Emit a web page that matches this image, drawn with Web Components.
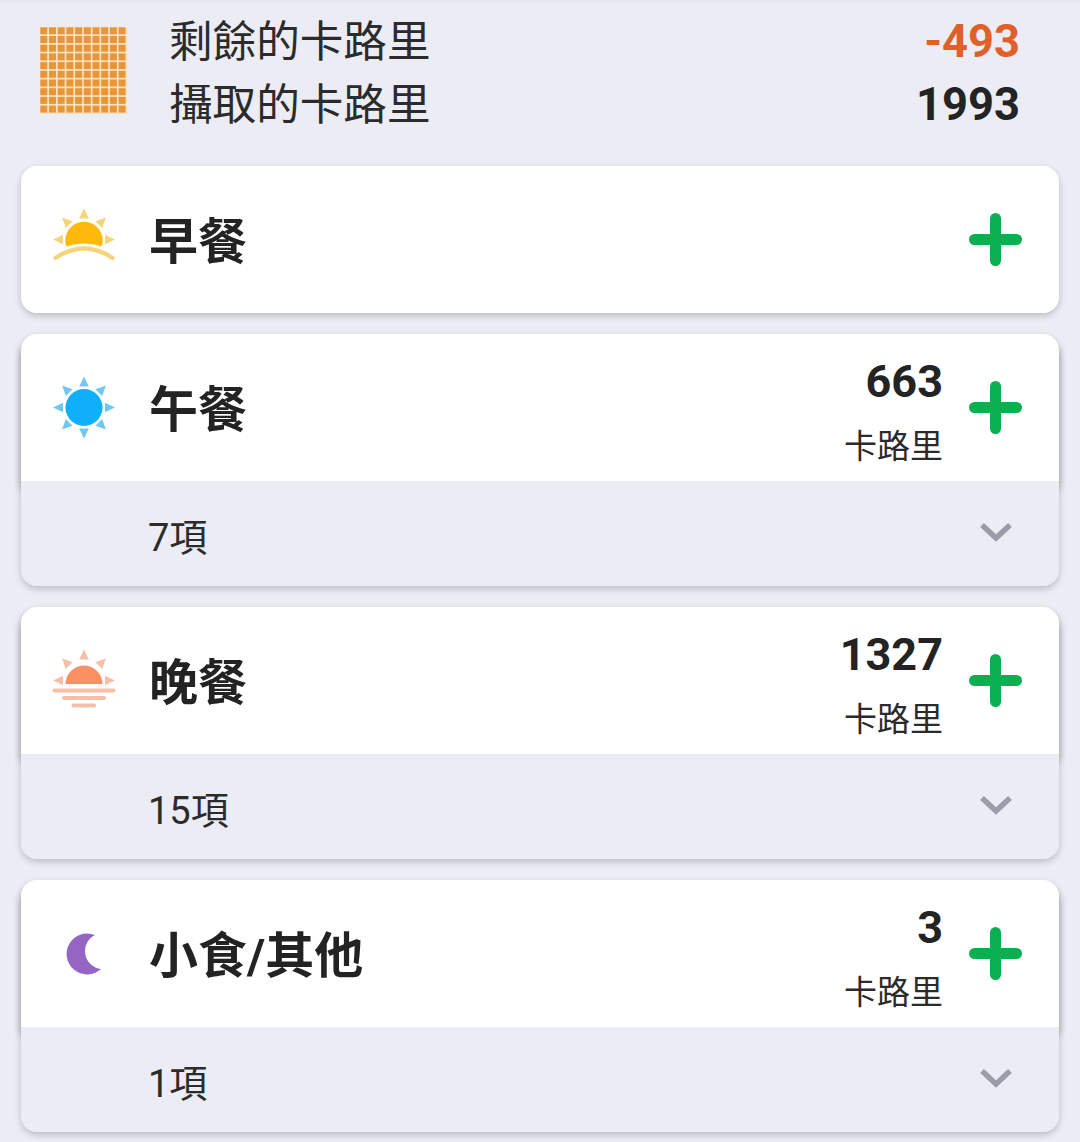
<!DOCTYPE html>
<html lang="zh-Hant"><head><meta charset="utf-8">
<style>
html,body{margin:0;padding:0;background:#ebecf4}
body{width:1080px;height:1142px;overflow:hidden;font-family:Roboto,"Noto Sans CJK TC",sans-serif;color:#232323}
</style></head><body>
<calorie-summary remaining="-493" taken="1993"></calorie-summary>
<meal-list>
<meal-card name="早餐" icon="morning"></meal-card>
<meal-card name="午餐" icon="noon" cal="663" items="7項"></meal-card>
<meal-card name="晚餐" icon="evening" cal="1327" items="15項"></meal-card>
<meal-card name="小食/其他" icon="moon" cal="3" items="1項"></meal-card>
</meal-list>
<script>
const FONT='Roboto,"Noto Sans CJK TC",sans-serif';
let cells='';
for(let r=0;r<10;r++)for(let c=0;c<10;c++)cells+=`<rect x="${(c*8.7+.3).toFixed(1)}" y="${(r*8.7+.3).toFixed(1)}" width="7" height="7"/>`;
class CalorieSummary extends HTMLElement{
  connectedCallback(){
    const s=this.attachShadow({mode:'open'});
    s.innerHTML=`<style>
    :host{display:flex;height:166px;box-sizing:border-box;padding:10px 60px 0 40px;font-family:${FONT};background:linear-gradient(#e4e5eb,#ebecf4 4px)}
    svg{flex:none;width:87px;height:87px;margin-top:17px;margin-right:43px;background:#fde3bd;fill:#e8963c}
    .rows{flex:1;display:grid;grid-template-columns:1fr auto;grid-auto-rows:63px;align-items:center}
    .l{font-size:43.6px;color:#2b2b2b;line-height:63px;margin-left:-1px;position:relative;top:1px}
    .v{font-size:45.3px;font-weight:700;text-align:right;line-height:62px}
    .o{color:#e0602a}
    </style>
    <svg viewBox="0 0 87 87">${cells}</svg>
    <div class="rows">
      <span class="l">剩餘的卡路里</span><span class="v o">${this.getAttribute('remaining')}</span>
      <span class="l">攝取的卡路里</span><span class="v">${this.getAttribute('taken')}</span>
    </div>`;
  }
}
class MealList extends HTMLElement{
  connectedCallback(){
    const s=this.attachShadow({mode:'open'});
    s.innerHTML=`<style>:host{display:flex;flex-direction:column;gap:21px;padding:0 21px}</style><slot></slot>`;
  }
}
const rays=(c,angles)=>angles.map(a=>`<path transform="rotate(${a} 32 32.5)" d="M32 1.5 L36.8 11.5 L27.2 11.5 Z" fill="${c}"/>`).join('');
const ICONS={
 morning:`${rays('#f6d479',[-90,-45,0,45,90])}<path d="M14.2 39.5 A18.8 18.8 0 1 1 49.8 39.5 Q32 33.5 14.2 39.5 Z" fill="#ffb90a"/><path d="M3.5 51 Q32 32 60.5 51" fill="none" stroke="#f6d479" stroke-width="4.2" stroke-linecap="round"/>`,
 noon:`${rays('#6fc9ee',[-90,-45,0,45,90,135,180,225])}<circle cx="32" cy="32.5" r="18.5" fill="#0fb0f9"/>`,
 evening:`${rays('#f6bfa8',[-90,-45,0,45,90])}<path d="M13.5 36 A18.5 18.5 0 1 1 50.5 36 Z" fill="#fc9065"/><g stroke="#f6bfa8" stroke-width="4" stroke-linecap="round"><path d="M2.5 42.5H61.5M12 50H52M21.5 57.5H42"/></g>`,
 moon:`<path d="M43 14 A20.5 20.5 0 1 0 49 48 A18 18 0 0 1 43 14 Z" fill="#9565c3"/>`
};
class MealCard extends HTMLElement{
  connectedCallback(){
    const s=this.attachShadow({mode:'open'});
    const cal=this.getAttribute('cal'),items=this.getAttribute('items');
    s.innerHTML=`<style>
    :host{display:block;border-radius:16px;box-shadow:0 3px 7px rgba(0,0,0,.2);background:#ebecf4;font-family:${FONT}}
    .head{height:147px;box-sizing:border-box;background:#fff;border-radius:16px;display:flex;align-items:center;padding:0 37px 0 31px;position:relative}
    :host([items]) .head{border-radius:16px 16px 0 0;box-shadow:0 8px 8px rgba(0,0,0,.28)}
    svg.ic{width:64px;height:64px;flex:none;margin-right:33px;margin-top:-1px}
    .name{flex:1;font-size:49px;font-weight:700;line-height:1;color:#232323;margin-top:5px}
    .cal{display:flex;flex-direction:column;align-items:flex-end;margin-right:26px;margin-top:8px}
    .num{font-size:45px;font-weight:700;line-height:50px;height:50px}
    .unit{font-size:33px;line-height:40px;margin-top:20px;color:#2b2b2b}
    svg.plus{width:53px;height:53px;flex:none;margin-top:-1px}
    .foot{height:105px;box-sizing:border-box;background:#ebecf4;border-radius:0 0 16px 16px;position:relative;display:flex;align-items:center;justify-content:space-between;padding:2px 47px 0 127px;font-size:38px;color:#2b2b2b}
    svg.chev{width:32px;height:20px;margin-top:-6px}
    </style>
    <div class="head">
      <svg class="ic" viewBox="0 0 64 64">${ICONS[this.getAttribute('icon')]}</svg>
      <span class="name">${this.getAttribute('name')}</span>
      ${cal?`<div class="cal"><span class="num">${cal}</span><span class="unit">卡路里</span></div>`:''}
      <svg class="plus" viewBox="0 0 53 53"><path d="M26.5 5.5V47.5M5.5 26.5H47.5" stroke="#0aaf4f" stroke-width="11" stroke-linecap="round" fill="none"/></svg>
    </div>
    ${items?`<div class="foot"><span>${items}</span><svg class="chev" viewBox="0 0 32 20"><path d="M2 3L16 16L30 3" fill="none" stroke="#9a9ca8" stroke-width="5.5"/></svg></div>`:''}`;
  }
}
customElements.define('calorie-summary',CalorieSummary);
customElements.define('meal-list',MealList);
customElements.define('meal-card',MealCard);
</script>
</body></html>
